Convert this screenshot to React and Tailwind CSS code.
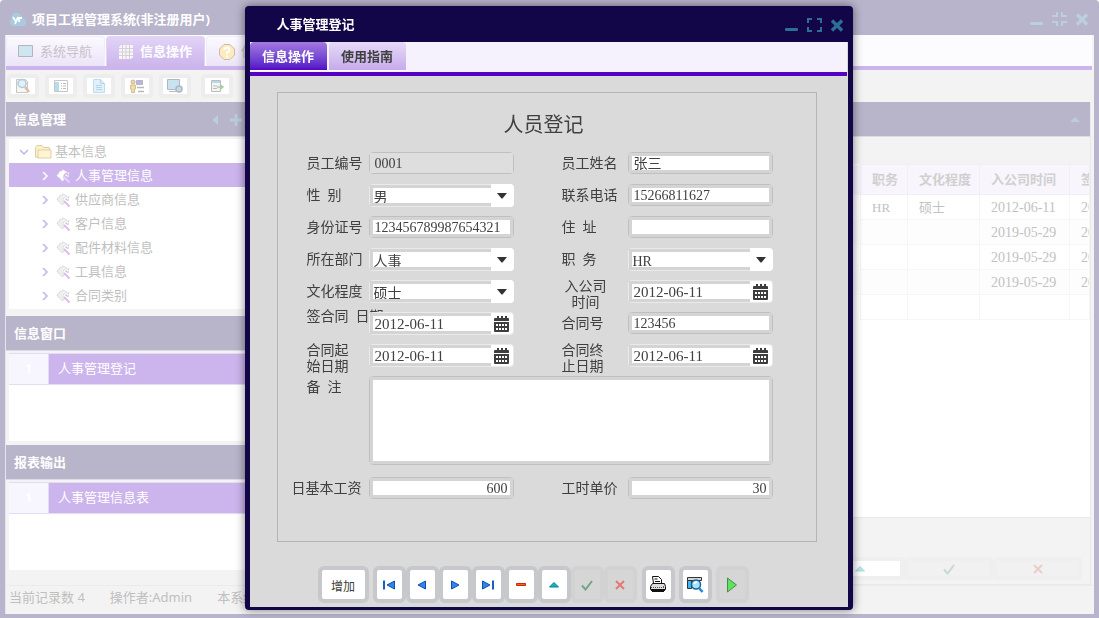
import { useState } from "react";

const uiFont = "font-['Noto_Sans','Noto_Sans_CJK_SC',sans-serif]";
const formFont = "font-['Liberation_Serif','Noto_Sans_CJK_SC',serif]";

const treeItems = ["人事管理信息", "供应商信息", "客户信息", "配件材料信息", "工具信息", "合同类别"];

const tableRows = [
  ["HR", "硕士", "2012-06-11", "2012-06-11"],
  ["", "", "2019-05-29", "2019-05-29"],
  ["", "", "2019-05-29", "2019-05-29"],
  ["", "", "2019-05-29", "2019-05-29"],
  ["", "", "", ""],
];

/* ---------- icons ---------- */

function WindowButtons({ restore }) {
  return (
    <div className="flex items-center gap-[9px]">
      <button aria-label="最小化" className="block">
        <svg className="block" width="13" height="14" fill="currentColor">
          <rect x="0" y="10" width="13" height="3" rx="1" />
        </svg>
      </button>
      <button aria-label="最大化" className="block">
        <svg className="block" width="15" height="14" fill="none" stroke="currentColor" strokeWidth="2">
          {restore ? (
            <path d="M5 0v4H0M10 0v4h5M5 14v-4H0M10 14v-4h5" />
          ) : (
            <path d="M1 5V1h4M10 1h4v4M1 9v4h4M10 13h4V9" />
          )}
        </svg>
      </button>
      <button aria-label="关闭" className="block">
        <svg className="block" width="12" height="14" fill="none" stroke="currentColor" strokeWidth="3.4">
          <path d="M1 2.500l10 10M11 2.500l-10 10" />
        </svg>
      </button>
    </div>
  );
}

function LogoIcon() {
  return (
    <svg width="17" height="14" viewBox="0 0 17 14">
      <path d="M4 13a4 4 0 0 1-1-7.600A4.600 4.600 0 0 1 11.500 2 4 4 0 0 1 14 5.500 3.800 3.800 0 0 1 13 13z" fill="#a9cbe0" />
      <path d="M4 4l2.500 4M9 4L6 11M9 5h4M10 4v5" stroke="#fff" strokeWidth="1.800" fill="none" />
    </svg>
  );
}

function FolderIcon() {
  return (
    <svg width="17" height="14" viewBox="0 0 17 14">
      <path d="M.5 12V2.500L2 .5h5l1.500 2H14l.5 1.500V12.500H2z" fill="#fdf0c6" stroke="#d9cca8" />
      <path d="M3 13V5h13v8z" fill="#fff5cf" stroke="#dccfa9" />
    </svg>
  );
}

function GearIcon({ active }) {
  return (
    <svg width="15" height="15" viewBox="0 0 15 15">
      <path
        d="M1 6l2-1V3l3-1 1-1.500L8.500 2 11 3 8 5 7 8l1 3-2 1-2-3-2-1z"
        fill={active ? "#fff" : "#efeff1"}
        stroke={active ? "#f0eaf8" : "#d3d3d6"}
        strokeDasharray="1.500 1"
      />
      <path d="M8 8L13.500 13.500" stroke={active ? "#e9d3fa" : "#dcb9f2"} strokeWidth="1.800" />
      <path d="M9.500 7L13 3.500M11 7.500l2-1" stroke={active ? "#f3effa" : "#cfcfd3"} strokeWidth="1.500" strokeDasharray="2 1" />
    </svg>
  );
}

function Chevron({ down }) {
  return (
    <svg width="8" height="8" fill="none" stroke="currentColor" strokeWidth="1.500">
      {down ? <path d="M0 2l4 4 4-4" /> : <path d="M2 0l4 4-4 4" />}
    </svg>
  );
}

function CalendarIcon() {
  return (
    <svg width="15" height="16" viewBox="0 0 15 16">
      <path d="M0 5V3q0-1 1-1h2V0h2v2h2V0h2v2h2V0h2v2h1q1 0 1 1v2z" fill="#3d3d3d" />
      <path d="M0 6h15v9q0 1-1 1H1q-1 0-1-1z" fill="#3d3d3d" />
      <path d="M2 8h2v2H2zM5 8h2v2H5zM8 8h2v2H8zM11 8h2v2h-2zM2 12h2v2H2zM5 12h2v2H5zM8 12h2v2H8zM11 12h2v2h-2z" fill="#fff" />
    </svg>
  );
}

const toolIcons = [
  <svg key="find" width="16" height="16">
    <path d="M1.500 1.500h9l2 2v11h-11z" fill="#f6f6f6" stroke="#c6c6c6" />
    <circle cx="7" cy="5.500" r="4" fill="#dff1fa" stroke="#b5c9d6" strokeWidth="1.500" />
    <path d="M10 9l4 5" stroke="#e2b9a4" strokeWidth="2.500" />
  </svg>,
  <svg key="list" width="16" height="16">
    <path d="M1.500 2.500h13v11h-13z" fill="#fff" stroke="#c6c6c6" />
    <path d="M2 4h4v9H2z" fill="#b9dced" />
    <path d="M8 5.500h5M8 8h5M8 10.500h5" stroke="#bbb" strokeDasharray="1 1 4 0" />
  </svg>,
  <svg key="doc" width="16" height="16">
    <path d="M2.500 1.500h7l4 4v9h-11z" fill="#e0f1fc" stroke="#bfdcee" />
    <path d="M9.500 1.500v4h4M5 7.500h6M5 9.500h6M5 11.500h6" stroke="#b4d5ea" fill="none" />
  </svg>,
  <svg key="user" width="16" height="16">
    <path d="M7.500 2.500h6v4h-6z" fill="#b9b4e4" stroke="#b5b5c0" />
    <path d="M8 9.500h7M9 13.500h6" stroke="#b8b8b8" strokeWidth="1.500" />
    <circle cx="4" cy="4" r="2" fill="#f0d9a8" stroke="#c3b493" />
    <path d="M1.500 7h5v4H5.500v3.500h-3V11h-1z" fill="#f4dc9f" stroke="#cfbf9a" />
  </svg>,
  <svg key="screen" width="16" height="16">
    <path d="M.5 1.500h12v10H.5z" fill="#c9e3f1" stroke="#b0b8be" />
    <path d="M2 13.500h7" stroke="#bbb" />
    <circle cx="12" cy="11" r="3" fill="#c6dfc6" stroke="#a9b6d6" strokeWidth="1.500" />
  </svg>,
  <svg key="export" width="16" height="16">
    <path d="M2.500 2.500h9v11h-9z" fill="#f4f4f4" stroke="#bcbcbc" />
    <path d="M3 3h8v2H3z" fill="#b9d8ea" />
    <path d="M4 8h4M4 10.500h4" stroke="#bbb" />
    <path d="M8 9h5M11 6.500l3 2.500-3 2.500" stroke="#aacbaa" strokeWidth="1.500" fill="none" />
  </svg>,
];

const navIcons = {
  first: (
    <svg width="12" height="12">
      <path d="M1 1.500v9" stroke="#1560c8" strokeWidth="2" />
      <path d="M11.500 2v8L4 6z" fill="#2f86e4" stroke="#0b4fb4" />
    </svg>
  ),
  prev: (
    <svg width="12" height="12">
      <path d="M9.500 2v8L2 6z" fill="#2f86e4" stroke="#0b4fb4" />
    </svg>
  ),
  next: (
    <svg width="12" height="12">
      <path d="M2.500 2v8L10 6z" fill="#2f86e4" stroke="#0b4fb4" />
    </svg>
  ),
  last: (
    <svg width="12" height="12">
      <path d="M11 1.500v9" stroke="#1560c8" strokeWidth="2" />
      <path d="M.5 2v8L8 6z" fill="#2f86e4" stroke="#0b4fb4" />
    </svg>
  ),
  remove: (
    <svg width="12" height="12">
      <path d="M1.500 4.500h9v2h-9z" fill="#f5641e" stroke="#c92a06" />
    </svg>
  ),
  up: (
    <svg width="12" height="12">
      <path d="M1.500 8L6 3.500 10.500 8z" fill="#12b4c8" stroke="#08808f" />
    </svg>
  ),
  check: (
    <svg width="12" height="12">
      <path d="M1 6.500l3.500 4L11 2" fill="none" stroke="#74a486" strokeWidth="2" />
    </svg>
  ),
  cancel: (
    <svg width="12" height="12">
      <path d="M2 2l8 8M10 2l-8 8" stroke="#e37a72" strokeWidth="2" />
    </svg>
  ),
};

function PrintIcon() {
  return (
    <svg width="18" height="18" viewBox="0 0 18 18">
      <path d="M4.500 7.500l-1-7h6l3 3v4" fill="#fff" stroke="#111" />
      <path d="M5.500 3h3M6 5.500h5" stroke="#111" />
      <path d="M3.500 7.500h12l1 3v3H1.500v-3z" fill="#ddd" stroke="#111" />
      <path d="M2 11.500h14" stroke="#555" strokeDasharray="1 1" />
      <path d="M2 14.500h14M3 15.500h12" stroke="#111" />
      <rect x="14" y="10" width="1" height="1" fill="#e22" />
    </svg>
  );
}

function PreviewIcon() {
  return (
    <svg width="18" height="18" viewBox="0 0 18 18">
      <path d="M1.500 1.500h14v3h-14z" fill="#d5d5d5" stroke="#333" />
      <path d="M1.500 4.500h4v8h-4z" fill="#46b4ec" stroke="#333" />
      <circle cx="10" cy="8.500" r="4.500" fill="#a9e2fb" stroke="#1b5f94" strokeWidth="1.500" />
      <path d="M8 8q1-2 3-2" stroke="#fff" strokeWidth="1.500" fill="none" />
      <path d="M13 12l3.500 4" stroke="#1c8bd8" strokeWidth="2.500" />
    </svg>
  );
}

/* ---------- form controls ---------- */

function FieldLabel({ id, children, type = "single" }) {
  const styles = {
    single: "flex items-center pt-[2px]",
    end: "flex items-center justify-end pr-[7px] pt-[2px]",
    lines: "pt-1",
    top: "pt-[2px]",
  };
  return (
    <label htmlFor={id} className={`h-8 whitespace-pre leading-4 ${styles[type]}`}>
      {children}
    </label>
  );
}

function TextField({ id, value = "", align = "", readOnly = false }) {
  return (
    <div className="flex items-center">
      <div className={`flex h-[22px] w-full rounded-sm border border-[#c0c0c0] ${readOnly ? "bg-[#dedede]" : "bg-white"}`}>
        <input
          id={id}
          defaultValue={value}
          readOnly={readOnly}
          className={`w-full min-w-0 px-[2px] pt-[2px] leading-4 border-[3px] outline-none ${readOnly ? "border-[#dedede]" : "border-[#d4d4d4]"} ${align}`}
        />
      </div>
    </div>
  );
}

function SelectField({ id, value }) {
  return (
    <div className="flex items-center">
      <div className="relative flex h-[23px] w-full rounded border border-[#eaeaea] bg-white">
        <select
          id={id}
          defaultValue={value}
          className="w-full appearance-none border-[3px] border-[#d4d4d4] pl-px pt-[2px] leading-4 outline-none"
        >
          <option>{value}</option>
        </select>
        <span className="pointer-events-none absolute -inset-y-px -right-px flex w-[23px] items-center justify-center rounded-r bg-white">
          <svg width="10" height="6" className="mt-[2px]">
            <path d="M0 0h10L5.500 5.500h-1z" fill="#333" />
          </svg>
        </span>
      </div>
    </div>
  );
}

function DateField({ id, value }) {
  return (
    <div className="flex items-center">
      <div className="flex h-[23px] w-full rounded border border-[#eaeaea] bg-white">
        <input
          id={id}
          defaultValue={value}
          className="min-w-0 flex-1 border-[3px] border-r-0 border-[#d4d4d4] px-[2px] pt-[2px] text-[15px] leading-4 outline-none"
        />
        <button aria-label="选择日期" className="flex w-[22px] items-center justify-center pt-[2px]">
          <CalendarIcon />
        </button>
      </div>
    </div>
  );
}

function ToolButton({ label, disabled, wide, children }) {
  return (
    <button
      aria-label={label}
      disabled={disabled}
      className={`flex h-[37px] items-center justify-center rounded-md border-4 text-[12px] ${
        wide ? "w-[51px] pt-1" : "w-[33px]"
      } ${disabled ? "border-[#d2d2d3] bg-[#d6d6d6]" : "border-[#c7c8cc] bg-white"}`}
    >
      {children}
    </button>
  );
}

/* ---------- main window behind the dialog ---------- */

function PanelHeader({ title, children }) {
  return (
    <div className="mb-[2px] flex h-[35px] items-center border-b border-[#dcdbe4] bg-[#b8b4ca] pl-2 pt-px text-[13px] font-bold text-white">
      <h2>{title}</h2>
      {children}
    </div>
  );
}

function ListPanel({ text }) {
  return (
    <div className="ml-[3px] h-[88px] bg-white">
      <div className="flex h-8 border-y border-[#e6dbf6] bg-[#ccb5ec] text-[13px] leading-7 text-white">
        <span className="w-10 border-r border-[#e3daf4] bg-[#f7f5fd] text-center font-bold text-white">1</span>
        <span className="pl-[9px]">{text}</span>
      </div>
    </div>
  );
}

function Sidebar() {
  return (
    <aside className="w-[250px] shrink-0">
      <PanelHeader title="信息管理">
        <div className="ml-auto flex items-center gap-3 pr-[14px] text-[#b9cddb]">
          <svg width="6" height="10" fill="currentColor">
            <path d="M6 0v10L0 5z" />
          </svg>
          <svg width="12" height="12" fill="currentColor">
            <path d="M4.500 0h3v4.500H12v3H7.500V12h-3V7.500H0v-3h4.500z" />
          </svg>
        </div>
      </PanelHeader>
      <ul className="mb-[7px] ml-[3px] bg-white pb-[2px] text-[13px] text-[#bfbfbf]">
        <li className="flex h-6 items-center pl-[11px] pt-[2px]">
          <span className="mr-[7px] text-[#c4b1e6]"><Chevron down /></span>
          <FolderIcon />
          <span className="ml-[3px]">基本信息</span>
        </li>
        {treeItems.map((item, i) => (
          <li
            key={item}
            className={`flex h-6 items-center pl-8 pt-[2px] ${i === 0 ? "bg-[#ccb5ec] text-white" : ""}`}
          >
            <span className={i === 0 ? "mr-[7px] text-white" : "mr-[7px] text-[#c4b1e6]"}><Chevron /></span>
            <GearIcon active={i === 0} />
            <span className="ml-1">{item}</span>
          </li>
        ))}
      </ul>
      <PanelHeader title="信息窗口" />
      <ListPanel text="人事管理登记" />
      <div className="h-1" />
      <PanelHeader title="报表输出" />
      <ListPanel text="人事管理信息表" />
    </aside>
  );
}

function DataPanel() {
  return (
    <section className="mr-[3px] flex min-w-0 flex-1 flex-col border-r border-[#e9e9ec]">
      <PanelHeader>
        <svg width="10" height="5" className="ml-auto mr-[10px]" fill="#b9cddb">
          <path d="M0 5L5 0l5 5z" />
        </svg>
      </PanelHeader>
      <div className="mt-[25px] h-[354px] overflow-hidden border-b border-[#e8e8e8] bg-white">
        <table className="w-full table-fixed border-collapse text-left text-[13px] text-[#c2c2c2]">
          <colgroup>
            <col />
            <col className="w-[47px]" />
            <col className="w-[72px]" />
            <col className="w-[90px]" />
            <col className="w-5" />
          </colgroup>
          <thead>
            <tr className="h-[30px] bg-[#f8f5fc] text-[#d0d0d0]">
              <th />
              {["职务", "文化程度", "入公司时间", "签合同日期"].map((h) => (
                <th key={h} className="overflow-hidden whitespace-nowrap border border-[#f1eef5] pl-[11px] font-bold">
                  {h}
                </th>
              ))}
            </tr>
          </thead>
          <tbody className={formFont}>
            {tableRows.map((row, i) => (
              <tr key={i} className="h-[25px] even:bg-[#fdfdfd]">
                <td />
                {row.map((cell, j) => (
                  <td
                    key={j}
                    className={`overflow-hidden whitespace-nowrap border border-[#f6f6f6] pl-[11px] pt-[2px] leading-5 ${j > 1 ? "text-[14px]" : ""}`}
                  >
                    {cell}
                  </td>
                ))}
              </tr>
            ))}
          </tbody>
        </table>
      </div>
      <div className="flex flex-1 items-end justify-end border-b border-[#e9e9ec] pb-1 pr-2">
        {["up", "check", "cancel"].map((name) => (
          <button
            key={name}
            aria-label={name}
            className={`flex h-[23px] w-[89px] items-center justify-center rounded border-4 border-[#efefef] ${
              name === "up" ? "bg-white" : "bg-[#f1f1f1]"
            }`}
          >
            <span className="opacity-30">{navIcons[name]}</span>
          </button>
        ))}
      </div>
    </section>
  );
}

function MainWindow() {
  const tab = "flex h-[30px] w-[99px] items-center rounded-t border border-b-0 text-[13px]";
  return (
    <div className="flex h-screen flex-col overflow-hidden rounded-t bg-[#b8b4cb] px-[5px] pb-1">
      <header className="flex h-[35px] shrink-0 items-center justify-between pl-1 pr-[6px] pt-[3px]">
        <div className="flex items-center gap-[6px] pt-px text-[13px] font-bold text-white">
          <LogoIcon />
          <h1>项目工程管理系统(非注册用户)</h1>
        </div>
        <div className="text-[#bccfdc]">
          <WindowButtons restore />
        </div>
      </header>
      <div className="flex min-h-0 flex-1 flex-col border-l border-[#e6e4ee] bg-[#f3f3f3]">
        <nav className="mr-[2px] flex h-[35px] shrink-0 gap-px border-b-4 border-[#ccb5ec] bg-[#fcfcfe] pt-px">
          <button className={`${tab} border-[#f0ebf9] bg-linear-to-b from-[#fbfafe] to-[#ebe4f8] pl-[11px] text-[#c5c2c8]`}>
            <svg width="15" height="13" className="mr-[7px] shrink-0">
              <path d="M.5.5h14v11H.5z" fill="#cfe5f1" stroke="#b3b7ba" />
            </svg>
            系统导航
          </button>
          <button className={`${tab} border-[#e1d3f4] bg-linear-to-b from-[#e2d3f6] to-[#ccb5ec] pl-3 font-bold text-white`}>
            <svg width="14" height="14" className="mr-[7px] shrink-0">
              <path d="M0 2l2-2h12v12l-2 2H0z" fill="#f8f5f8" />
              <path d="M0 3.500h14M0 7h14M0 10.500h14M3.500 0v14M7 0v14M10.500 0v14" stroke="#d5d0d8" />
            </svg>
            信息操作
          </button>
          <button className={`${tab} border-[#f0ebf9] bg-linear-to-b from-[#fbfafe] to-[#ebe4f8] pl-3 text-[#c5c2c8]`}>
            <svg width="16" height="16" className="mr-[6px] shrink-0">
              <path d="M5 .5h6L15.500 5v6L11 15.500H5L.5 11V5z" fill="#fdebc0" stroke="#d3b8a8" />
              <path d="M5.500 6q0-2.500 2.500-2.500T10.500 6Q10.500 7.500 8 8.500v1.500M8 11.500v2" stroke="#fff" strokeWidth="2" fill="none" />
            </svg>
            使用指南
          </button>
        </nav>
        <div className="flex h-8 shrink-0 items-center gap-[6px] pl-px">
          {toolIcons.map((icon, i) => (
            <button
              key={i}
              aria-label={`工具${i + 1}`}
              className={`flex h-6 w-8 items-center justify-center rounded border-4 border-[#ededed] bg-white ${i === 5 ? "ml-1" : ""}`}
            >
              {icon}
            </button>
          ))}
        </div>
        <main className="flex min-h-0 flex-1">
          <Sidebar />
          <DataPanel />
        </main>
        <footer className="flex h-[29px] shrink-0 items-center gap-[25px] border-t border-[#ebebeb] pb-[5px] pl-[3px] text-[13px] text-[#bfbfbf]">
          <span>当前记录数 4</span>
          <span>操作者:Admin</span>
          <span>本系统</span>
        </footer>
      </div>
    </div>
  );
}

/* ---------- dialog ---------- */

function StaffForm() {
  return (
    <form
      className={`ml-[27px] mr-[31px] mt-4 h-[450px] border border-[#b4b4b4] pl-[29px] pt-5 text-[14px] text-[#404040] ${formFont}`}
      onSubmit={(e) => e.preventDefault()}
    >
      <h2 className="mb-[10px] mr-[35px] text-center text-[20px] leading-6">人员登记</h2>
      <div className="grid auto-rows-[32px] grid-cols-[62px_145px_48px_66px_145px]">
        <FieldLabel id="no">员工编号</FieldLabel>
        <TextField id="no" value="0001" readOnly />
        <span />
        <FieldLabel id="name">员工姓名</FieldLabel>
        <TextField id="name" value="张三" />

        <FieldLabel id="sex">性  别</FieldLabel>
        <SelectField id="sex" value="男" />
        <span />
        <FieldLabel id="phone">联系电话</FieldLabel>
        <TextField id="phone" value="15266811627" />

        <FieldLabel id="card">身份证号</FieldLabel>
        <TextField id="card" value="123456789987654321" />
        <span />
        <FieldLabel id="address">住  址</FieldLabel>
        <TextField id="address" />

        <FieldLabel id="dept">所在部门</FieldLabel>
        <SelectField id="dept" value="人事" />
        <span />
        <FieldLabel id="job">职  务</FieldLabel>
        <SelectField id="job" value="HR" />

        <FieldLabel id="edu">文化程度</FieldLabel>
        <SelectField id="edu" value="硕士" />
        <span />
        <FieldLabel id="join" type="lines">
          <span className="block w-12 text-center">入公司<br />时间</span>
        </FieldLabel>
        <DateField id="join" value="2012-06-11" />

        <FieldLabel id="sign" type="top">签合同  日期</FieldLabel>
        <DateField id="sign" value="2012-06-11" />
        <span />
        <FieldLabel id="contract">合同号</FieldLabel>
        <TextField id="contract" value="123456" />

        <FieldLabel id="start" type="lines">合同起<br />始日期</FieldLabel>
        <DateField id="start" value="2012-06-11" />
        <span />
        <FieldLabel id="end" type="lines">合同终<br />止日期</FieldLabel>
        <DateField id="end" value="2012-06-11" />
      </div>
      <div className="mb-[7px] mt-[5px] flex">
        <label htmlFor="memo" className="w-[62px] whitespace-pre pt-1 leading-4">备  注</label>
        <div className="h-[89px] w-[404px] rounded-sm border border-[#c0c0c0] bg-white">
          <textarea id="memo" className="block h-full w-full resize-none border-[3px] border-[#d4d4d4] outline-none" />
        </div>
      </div>
      <div className="grid grid-cols-[62px_145px_48px_66px_145px]">
        <FieldLabel id="daily" type="end">日基本工资</FieldLabel>
        <TextField id="daily" value="600" align="text-right" />
        <span />
        <FieldLabel id="hourly">工时单价</FieldLabel>
        <TextField id="hourly" value="30" align="text-right" />
      </div>
    </form>
  );
}

function Dialog() {
  const [tab, setTab] = useState(0);
  return (
    <div className="fixed inset-0 flex items-center justify-center pb-[2px] pr-[2px]">
      <div
        role="dialog"
        aria-label="人事管理登记"
        className="w-[608px] rounded bg-[#120548] px-[5px] pb-[3px] shadow-[0_0_10px_rgba(0,0,0,0.5)]"
      >
        <header className="flex h-9 items-center justify-between pl-[27px] pr-[5px] pt-[2px]">
          <h2 className="text-[13px] font-bold text-white">人事管理登记</h2>
          <div className="text-[#2c6f93]">
            <WindowButtons />
          </div>
        </header>
        <div className="bg-[#dadada] pb-1">
          <nav className="mr-px flex h-[34px] gap-[2px] border-b-4 border-[#5502c4] bg-[#f6f2fd] pb-px">
            {["信息操作", "使用指南"].map((name, i) => (
              <button
                key={name}
                onClick={() => setTab(i)}
                className={`w-[77px] rounded-t border-b pt-[2px] text-[13px] font-bold ${
                  tab === i
                    ? "border-white bg-linear-to-b from-[#a578e0] to-[#5502c4] text-white"
                    : "border-white bg-linear-to-b from-[#e6daf7] to-[#c6abeb] text-[#404040]"
                }`}
              >
                {name}
              </button>
            ))}
          </nav>
          <StaffForm />
          <div className="mt-6 flex pl-[68px] text-[#404040]">
            <ToolButton label="增加" wide>增加</ToolButton>
            <div className="ml-1 flex">
              <ToolButton label="首记录">{navIcons.first}</ToolButton>
              <ToolButton label="上一条">{navIcons.prev}</ToolButton>
              <ToolButton label="下一条">{navIcons.next}</ToolButton>
              <ToolButton label="尾记录">{navIcons.last}</ToolButton>
              <ToolButton label="删除">{navIcons.remove}</ToolButton>
              <ToolButton label="编辑">{navIcons.up}</ToolButton>
              <ToolButton label="保存" disabled>{navIcons.check}</ToolButton>
              <ToolButton label="取消" disabled>{navIcons.cancel}</ToolButton>
            </div>
            <div className="ml-[5px] flex gap-1">
              <ToolButton label="打印"><PrintIcon /></ToolButton>
              <ToolButton label="预览"><PreviewIcon /></ToolButton>
              <ToolButton label="运行" disabled>
                <svg width="12" height="16">
                  <path d="M1.500 1v14L10.500 8z" fill="#5fe35f" stroke="#4a8a4a" />
                </svg>
              </ToolButton>
            </div>
          </div>
        </div>
      </div>
    </div>
  );
}

export default function App() {
  return (
    <div className={uiFont}>
      <MainWindow />
      <Dialog />
    </div>
  );
}
